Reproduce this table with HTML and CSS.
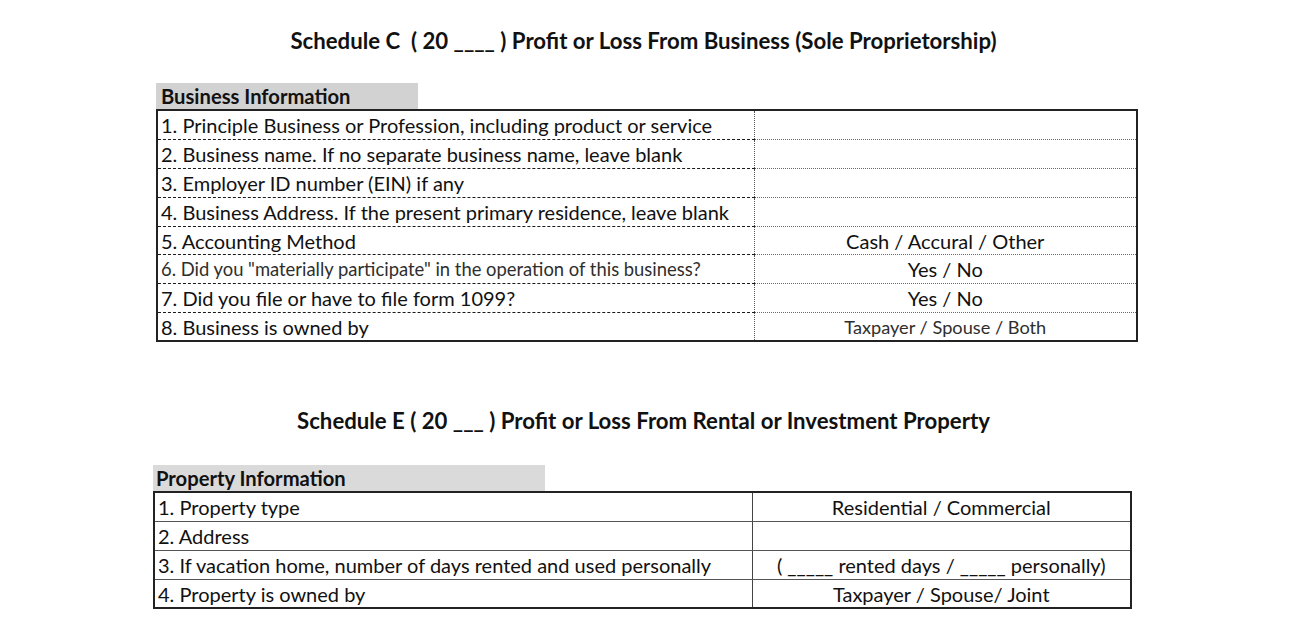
FILE: index.html
```html
<!DOCTYPE html>
<html lang="en">
<head>
<meta charset="utf-8">
<title>Schedule C and Schedule E</title>
<link rel="stylesheet" href="styles.css">
</head>
<body>
<div class="page">
  <h1 class="title title-c">Schedule C&nbsp; ( 20 ____ ) Profit or Loss From Business (Sole Proprietorship)</h1>

  <section class="block block-c">
    <div class="caption caption-c">Business Information</div>
    <table class="grid grid-c">
      <colgroup><col class="col-label-c"><col></colgroup>
      <tbody>
        <tr><td class="label">1. Principle Business or Profession, including product or service</td><td class="value"></td></tr>
        <tr><td class="label">2. Business name. If no separate business name, leave blank</td><td class="value"></td></tr>
        <tr><td class="label">3. Employer ID number (EIN) if any</td><td class="value"></td></tr>
        <tr><td class="label">4. Business Address. If the present primary residence, leave blank</td><td class="value"></td></tr>
        <tr class="short"><td class="label">5. Accounting Method</td><td class="value">Cash / Accural / Other</td></tr>
        <tr><td class="label small">6. Did you "materially participate" in the operation of this business?</td><td class="value">Yes / No</td></tr>
        <tr><td class="label">7. Did you file or have to file form 1099?</td><td class="value">Yes / No</td></tr>
        <tr class="short"><td class="label">8. Business is owned by</td><td class="value small">Taxpayer / Spouse / Both</td></tr>
      </tbody>
    </table>
  </section>

  <h1 class="title title-e">Schedule E ( 20 ___ ) Profit or Loss From Rental or Investment Property</h1>

  <section class="block block-e">
    <div class="caption caption-e">Property Information</div>
    <table class="grid grid-e">
      <colgroup><col class="col-label-e"><col></colgroup>
      <tbody>
        <tr><td class="label">1. Property type</td><td class="value">Residential / Commercial</td></tr>
        <tr><td class="label">2. Address</td><td class="value"></td></tr>
        <tr><td class="label">3. If vacation home, number of days rented and used personally</td><td class="value pre">(  _____ rented days /  _____ personally)</td></tr>
        <tr class="short"><td class="label">4. Property is owned by</td><td class="value">Taxpayer / Spouse/ Joint</td></tr>
      </tbody>
    </table>
  </section>
</div>
</body>
</html>
```

FILE: styles.css
```css
html, body {
  margin: 0;
  padding: 0;
  background: #ffffff;
}

body {
  font-family: Lato, "Open Sans", "Liberation Sans", sans-serif;
  color: #111111;
  width: 1299px;
  height: 634px;
  overflow: hidden;
}

.page {
  padding-top: 26px;
}

.title {
  margin: 0;
  padding-right: 12px;
  text-align: center;
  font-size: 22.2px;
  font-weight: 700;
  line-height: 30px;
  color: #111111;
  white-space: pre;
}

.title-e {
  margin-top: 64px;
}

.block-c {
  margin-top: 27px;
  margin-left: 156px;
  width: 982px;
}

.block-e {
  margin-top: 29px;
  margin-left: 153px;
  width: 979px;
}

.caption {
  font-weight: 700;
  font-size: 20.2px;
  line-height: 26px;
  padding-left: 5px;
  background: #d2d2d2;
}

.caption-c {
  width: 257px;
}

.caption-e {
  width: 389px;
  padding-left: 3px;
  background: #dadada;
}

.grid {
  width: 100%;
  border-collapse: collapse;
  border: 2px solid #222222;
  font-size: 20px;
  table-layout: fixed;
}

.col-label-c { width: 597px; }
.col-label-e { width: 598px; }

.grid td {
  height: 28px;
  padding: 0 3px;
  line-height: 24px;
  white-space: nowrap;
  overflow: hidden;
}

.grid tr.short td {
  height: 27px;
}

.grid-c td.label {
  border-bottom: 1px dashed #1a1a1a;
  border-right: 1px dotted #555555;
}

.grid-c td.value {
  border-bottom: 1px dotted #6a6a6a;
  text-align: center;
}

.grid-c tr:last-child td {
  border-bottom: none;
}

.grid-e td {
  border-bottom: 1px solid #555555;
}

.grid-e td.label {
  border-right: 1px solid #444444;
}

.grid-e td.value {
  text-align: center;
}

.grid-e tr:last-child td {
  border-bottom: none;
}

.label.small {
  font-size: 18.4px;
  color: #2e2e2e;
}

.value.small {
  font-size: 18.2px;
  color: #2e2e2e;
}

.pre {
  white-space: pre;
}
```
